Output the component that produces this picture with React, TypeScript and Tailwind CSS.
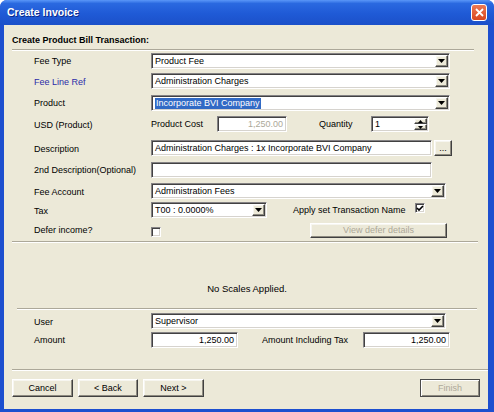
import React from 'react'

const sunken =
    "bg-white border border-t-[#848284] border-l-[#848284] border-b-white border-r-white shadow-[inset_1px_1px_0_#424142,inset_-1px_-1px_0_#d6d3ce]";
const raised =
    "bg-[#ece9d8] border border-t-white border-l-white border-b-[#404040] border-r-[#404040] shadow-[inset_-1px_-1px_0_#8e8b80,inset_1px_1px_0_#f7f6f0]";

const DownArrow = () => (
    <svg width="7" height="4" viewBox="0 0 7 4">
        <path d="M0 0h7L3.5 4z" fill="#000" />
    </svg>
);

const DropBtn = () => (
    <div className={`${raised} w-[13px] h-full flex items-center justify-center shrink-0`}>
        <DownArrow />
    </div>
);

const Combo = ({ w, children }: { w: string; children?: React.ReactNode }) => (
    <div className={`${sunken} ${w} h-[16px] p-[1px] flex items-center`}>
        <div className="flex-1 pl-[2px] truncate leading-[11px]">{children}</div>
        <DropBtn />
    </div>
);

const TextBox = ({ w, children, right, disabled }: { w: string; children?: React.ReactNode; right?: boolean; disabled?: boolean }) => (
    <div className={`${sunken} ${w} h-[16px] px-[3px] flex items-center leading-[11px] ${right ? "justify-end" : ""} ${disabled ? "text-[#aca899]" : ""}`}>
        {children}
    </div>
);

const Check = ({ checked }: { checked?: boolean }) => (
    <div className={`${sunken} w-[10px] h-[10px] flex items-center justify-center`}>
        {checked && (
            <svg width="8" height="7" viewBox="0 0 8 7">
                <path d="M1 3l2 2 4-4" stroke="#000" strokeWidth="1.6" fill="none" />
            </svg>
        )}
    </div>
);

const Label = ({ children, w = "w-[117px]", className = "" }: { children: React.ReactNode; w?: string; className?: string }) => (
    <div className={`${w} shrink-0 leading-[11px] ${className}`}>{children}</div>
);

const Btn = ({ children, w, disabled, className = "" }: { children: React.ReactNode; w: string; disabled?: boolean; className?: string }) => (
    <div className={`${raised} ${w} h-[18px] flex items-center justify-center leading-[11px] ${disabled ? "text-[#aca899]" : ""} ${className}`}>
        {children}
    </div>
);

const Separator = ({ className }: { className: string }) => (
    <div className={`h-[2px] border-t border-t-[#aca899] border-b border-b-white ${className}`} />
);

export default function App() {
    return (
        <div className="w-[494px] h-[412px] bg-white font-['Liberation_Sans',Arial,sans-serif] text-[9px] text-black">
            <div className="w-full h-full flex flex-col rounded-t-[7px] overflow-hidden bg-[#1d4fcf]">
                {/* title bar */}
                <div className="h-[25px] shrink-0 flex items-center pl-[7px] pr-[7px] bg-[linear-gradient(to_bottom,#5a97f8_0%,#2a69e0_14%,#1f5ad6_55%,#1b50c9_100%)]">
                    <span className="text-white font-bold text-[10.5px] [text-shadow:1px_1px_0_#0c2a8a]">Create Invoice</span>
                    <div className="ml-auto w-[16px] h-[17px] rounded-[3px] border border-white bg-[linear-gradient(to_bottom,#ec7a55,#d9461f)] flex items-center justify-center">
                        <svg width="9" height="9" viewBox="0 0 9 9">
                            <path d="M1 1l7 7M8 1L1 8" stroke="#fff" strokeWidth="1.8" />
                        </svg>
                    </div>
                </div>

                {/* body */}
                <div className="flex-1 flex pl-[4px] pr-[6px] pb-[3px]">
                    <div className="flex-1 bg-[#ece9d8] flex flex-col">
                        <div className="pt-[10px] pl-[8px] font-bold text-[9px] leading-[11px]">Create Product Bill Transaction:</div>
                        <Separator className="mt-[3px] ml-[8px] w-[462px]" />

                        <div className="flex items-center h-[16px] pl-[30px] mt-[2px]">
                            <Label>Fee Type</Label>
                            <Combo w="w-[299px]">Product Fee</Combo>
                        </div>
                        <div className="flex items-center h-[16px] pl-[30px] mt-[4px]">
                            <Label className="text-[#2b2ba8] pt-[3px]">Fee Line Ref</Label>
                            <Combo w="w-[299px]">Administration Charges</Combo>
                        </div>
                        <div className="flex items-center h-[16px] pl-[30px] mt-[6px]">
                            <Label>Product</Label>
                            <Combo w="w-[299px]">
                                <span className="bg-[#316ac5] text-white px-[1px] py-[1px]">Incorporate BVI Company</span>
                            </Combo>
                        </div>
                        <div className="flex items-center h-[16px] pl-[30px] mt-[5px]">
                            <Label className="pt-[2px]">USD (Product)</Label>
                            <Label w="w-[66px]">Product Cost</Label>
                            <TextBox w="w-[70px]" right disabled>1,250.00</TextBox>
                            <Label w="w-[52px]" className="ml-[32px]">Quantity</Label>
                            <div className={`${sunken} w-[58px] h-[16px] p-[1px] flex items-center`}>
                                <div className="flex-1 pl-[2px] leading-[11px]">1</div>
                                <div className="w-[13px] h-full flex flex-col">
                                    <div className={`${raised} flex-1 flex items-center justify-center`}>
                                        <svg width="5" height="3" viewBox="0 0 5 3"><path d="M0 3h5L2.5 0z" fill="#000" /></svg>
                                    </div>
                                    <div className={`${raised} flex-1 flex items-center justify-center`}>
                                        <svg width="5" height="3" viewBox="0 0 5 3"><path d="M0 0h5L2.5 3z" fill="#000" /></svg>
                                    </div>
                                </div>
                            </div>
                        </div>
                        <div className="flex items-center h-[16px] pl-[30px] mt-[8px]">
                            <Label className="pt-[2px]">Description</Label>
                            <TextBox w="w-[281px]">Administration Charges : 1x Incorporate BVI Company</TextBox>
                            <Btn w="w-[18px] !h-[16px] ml-[2px]">...</Btn>
                        </div>
                        <div className="flex items-center h-[16px] pl-[30px] mt-[6px]">
                            <Label>2nd Description(Optional)</Label>
                            <TextBox w="w-[281px]" />
                        </div>
                        <div className="flex items-center h-[16px] pl-[30px] mt-[5px]">
                            <Label className="pt-[2px]">Fee Account</Label>
                            <Combo w="w-[295px]">Administration Fees</Combo>
                        </div>
                        <div className="flex items-center h-[16px] pl-[30px] mt-[3px]">
                            <Label className="pt-[2px]">Tax</Label>
                            <Combo w="w-[116px]">T00 : 0.0000%</Combo>
                            <Label w="w-[122px]" className="ml-[26px]">Apply set Transaction Name</Label>
                            <div className="-mt-[4px]">
                                <Check checked />
                            </div>
                        </div>
                        <div className="flex items-center h-[16px] pl-[30px] mt-[4px]">
                            <Label>Defer income?</Label>
                            <div className="mt-[3px]">
                                <Check />
                            </div>
                            <Btn w="w-[137px] !h-[15px] ml-[149px]" disabled>View defer details</Btn>
                        </div>
                        <Separator className="mt-[3px] ml-[8px] w-[466px]" />

                        <div className="mt-[40px] text-center leading-[11px] text-[9.5px] pl-[2px]">No Scales Applied.</div>
                        <Separator className="mt-[14px] ml-[13px] w-[460px]" />

                        <div className="flex items-center h-[16px] pl-[30px] mt-[3px]">
                            <Label className="pt-[2px]">User</Label>
                            <Combo w="w-[295px]">Supervisor</Combo>
                        </div>
                        <div className="flex items-center h-[16px] pl-[30px] mt-[3px]">
                            <Label>Amount</Label>
                            <TextBox w="w-[87px]" right>1,250.00</TextBox>
                            <Label w="w-[101px]" className="ml-[24px]">Amount Including Tax</Label>
                            <TextBox w="w-[87px]" right>1,250.00</TextBox>
                        </div>
                        <Separator className="mt-[21px] ml-[8px] w-[476px]" />

                        <div className="flex items-center mt-[8px] pl-[8px] pr-[8px]">
                            <Btn w="w-[61px]">Cancel</Btn>
                            <Btn w="w-[60px]" className="ml-[5px]">&lt; Back</Btn>
                            <Btn w="w-[61px]" className="ml-[5px]">Next &gt;</Btn>
                            <Btn w="w-[60px]" className="ml-auto !border-[#4a4a4a] !shadow-[inset_1px_1px_0_#fff,inset_-1px_-1px_0_#8e8b80]" disabled>Finish</Btn>
                        </div>
                    </div>
                </div>
            </div>
        </div>
    )
}
